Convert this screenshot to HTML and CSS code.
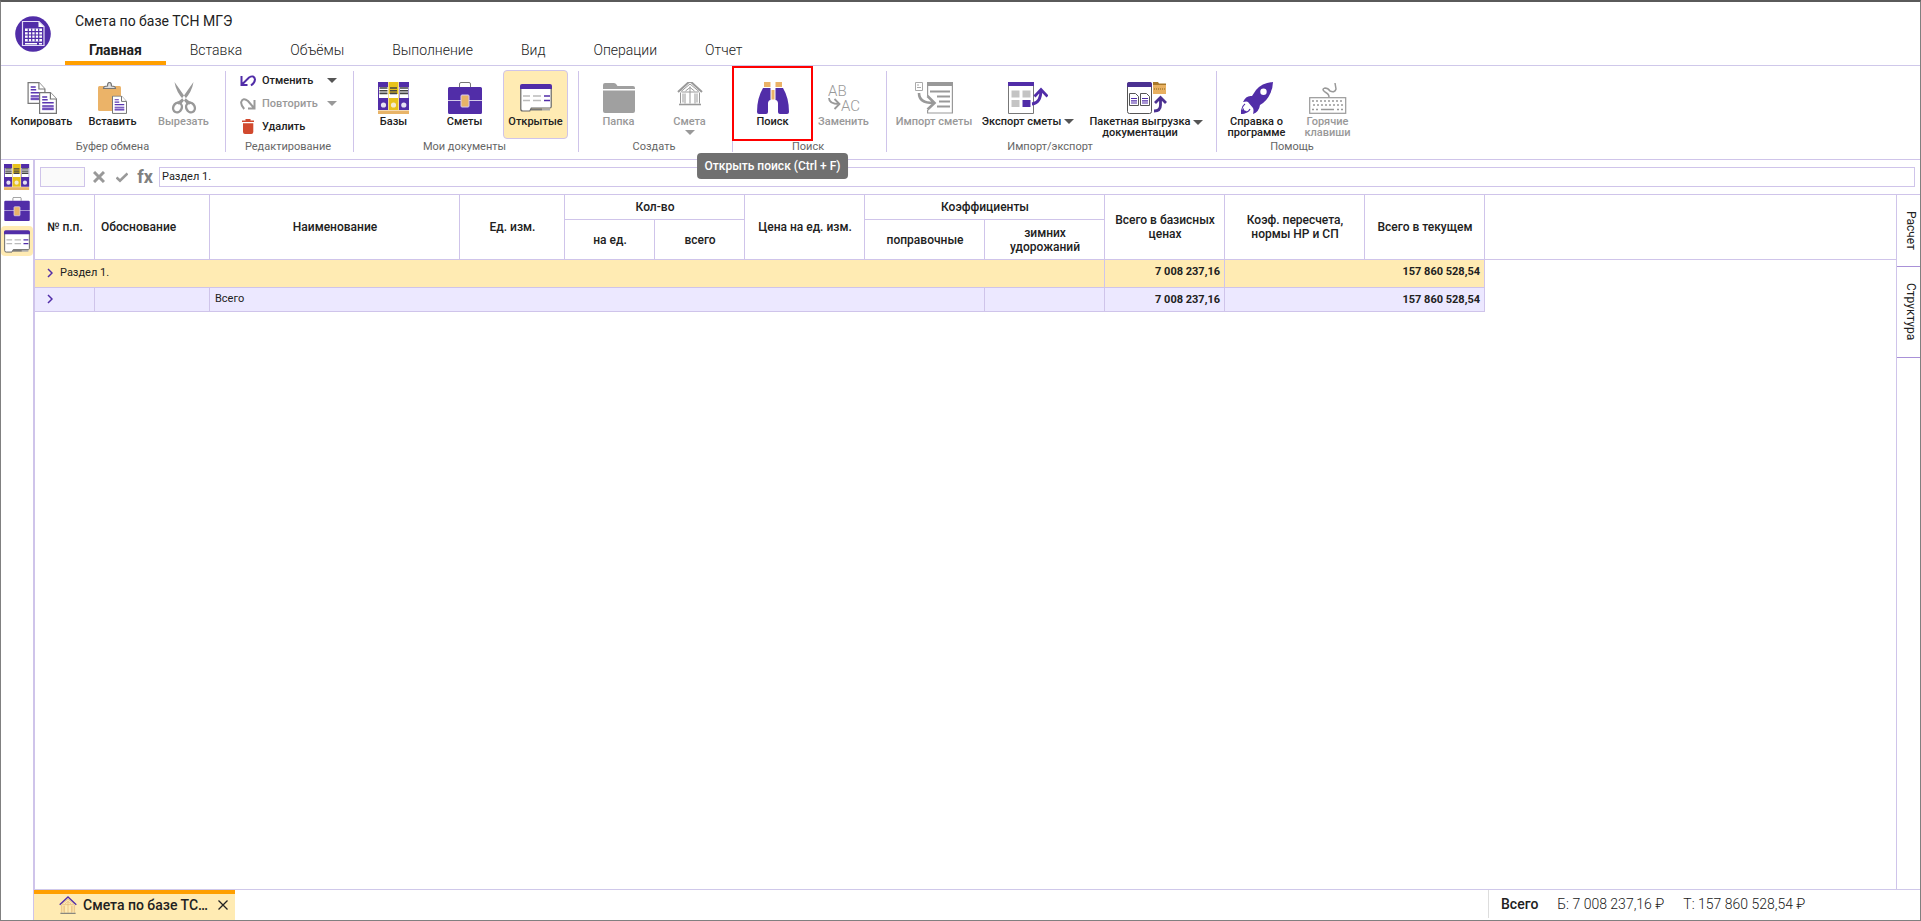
FILE: index.html
```html
<!DOCTYPE html>
<html lang="ru">
<head>
<meta charset="utf-8">
<title>Смета по базе ТСН МГЭ</title>
<link rel="stylesheet" href="styles.css">
</head>
<body>
<svg class="sprite" aria-hidden="true">
  <symbol id="i-bases" viewBox="0 0 32 32">
    <path fill="#512da8" d="M0 0h10v28H0zM21 0h10v28H21z"/><path fill="#e8c21c" d="M10.500 0h10v28h-10z"/>
    <path fill="#fff" d="M1 5h9v11H1zM11 12h9v4h-9zM21.500 5h9v11h-9z"/>
    <path stroke="#444" stroke-width="1.600" d="M1.500 6h8M1.500 8.700h8M1.500 11.400h8M12 6h7M12 8.700h7M12 11.400h7M22 6h8M22 8.700h8M22 11.400h8"/>
    <circle cx="5.500" cy="23" r="2.600" fill="#e6e1f2"/><circle cx="15.500" cy="23" r="2.600" fill="#f3ead0"/><circle cx="25.800" cy="23" r="2.600" fill="#e6e1f2"/>
    <path fill="#e8b468" d="M0 28.500h31V32H0z"/>
  </symbol>
  <symbol id="i-case" viewBox="0 0 34 32">
    <path fill="none" stroke="#777" d="M11.500 5V2q0-1.500 1.500-1.500h8q1.500 0 1.500 1.500v3"/>
    <path fill="#512da8" d="M1.500 5h31Q34 5 34 6.500v11.500H0V6.500Q0 5 1.500 5zM0 18.800h34v11.700Q34 32 32.500 32h-31Q0 32 0 30.500z"/>
    <rect x="13" y="13" width="8" height="12" rx="1" fill="#e8b468" stroke="#d9cdf0"/>
  </symbol>
  <symbol id="i-open" viewBox="0 0 32 28">
    <path fill="#fff" stroke="#666" stroke-width="1.200" d="M.8 4v21q0 2 2 2h7l1.500-3H30q1.200 0 1.200-1.500V4z"/>
    <path fill="#512da8" d="M0 5V2q0-2 2-2h28q2 0 2 2v3z"/>
    <path stroke="#bbb" stroke-width="1.500" d="M3 12h7M13 12h8M3 16.500h7M13 16.500h8"/><path stroke="#512da8" stroke-width="1.500" d="M24 12h6M24 16.500h6"/>
    <path stroke="#777" stroke-width="2" d="M11 25.500h11"/><path stroke="#aaa" stroke-width="2" d="M22 25.500h8"/>
  </symbol>
  <symbol id="i-page" viewBox="0 0 18 22">
    <path fill="#fff" stroke="#777" stroke-width="1.200" d="M.6.600h10.800l6 6.400v14.400H.6z"/><path fill="#fff" stroke="#777" stroke-width="1.200" d="M11.400.600V7h6"/>
    <path fill="#b9a5e0" d="M3.200 14.500h11.500v3.800H3.200z"/><path stroke="#5a36b0" stroke-width="1.400" d="M3.200 5h5M3.200 7.800h5.500M3.200 10.800h11.500M3.200 14h11.500M3.200 17h11.500"/>
  </symbol>
  <symbol id="i-house" viewBox="0 0 26 26">
    <g fill="none" stroke="currentColor"><path d="M4 12l9-7.500 9 7.500M4.500 12.500h17M3.500 13v11M22.500 13v11M8 14v10M13 7v17M18 14v10M8.500 11.500L13 8l4.500 3.500M6 14v9M20 14v9"/><path style="stroke:var(--roof, currentColor)" stroke-width="2" d="M1 12.500L13 1.500l12 11"/><path style="stroke:var(--base, currentColor)" stroke-width="1.600" d="M2 25h22"/></g>
  </symbol>
</svg>

<div class="app">
  <header class="head">
    <svg class="logo" viewBox="0 0 36 36"><circle cx="18" cy="18" r="17.800" fill="#512da8"/><path fill="none" stroke="#e4dcf6" stroke-width="1.200" d="M7.500 5.500h16.500l5 5V29.500H7.500z"/><path fill="#fff" d="M23.500 5.500v5.500H29z"/><path fill="#fff" d="M10 12.500h17v13H10zM10 27h12v1.500H10zM24 27h3v1.500h-3z"/><path stroke="#512da8" stroke-width="1.200" d="M10 15.700h17M10 19h17M10 22.300h17M13.300 12.500v13M16.700 12.500v13M20.200 12.500v13M23.700 12.500v13"/></svg>
    <div class="head-main">
      <h1 class="title">Смета по базе ТСН МГЭ</h1>
      <nav class="tabs">
        <button class="tab tab-active">Главная</button><button class="tab">Вставка</button><button class="tab">Объёмы</button><button class="tab">Выполнение</button><button class="tab">Вид</button><button class="tab">Операции</button><button class="tab">Отчет</button>
      </nav>
    </div>
  </header>

  <section class="ribbon">
    <div class="group group-first">
      <div class="tools">
        <button class="tool"><svg class="ico" viewBox="0 0 32 32"><use href="#i-page" x="1" y="0" width="19" height="22"/><use href="#i-page" x="13" y="10" width="18" height="22"/></svg><span>Копировать</span></button>
        <button class="tool"><svg class="ico" viewBox="0 0 32 32"><rect x="1" y="4" width="23" height="25" rx="1.500" fill="#ebb368"/><path fill="#ddd" stroke="#777" stroke-width="1.200" d="M6.500 6.500q0-2.500 4-2.500 0-3.500 2-3.500t2 3.500q4 0 4 2.500z"/><use href="#i-page" x="15" y="13.500" width="15" height="18.500"/></svg><span>Вставить</span></button>
        <button class="tool" disabled><svg class="ico" viewBox="0 0 32 32"><g fill="none" stroke="#999" stroke-width="2.400"><ellipse cx="9.500" cy="25.500" rx="4.200" ry="5" transform="rotate(25 9.500 25.500)"/><ellipse cx="22.500" cy="25.500" rx="4.200" ry="5" transform="rotate(-25 22.500 25.500)"/></g><path fill="#999" d="M6.500 0l12 17q3 3 6 3.500l-3 2q-3.500-.5-5.500-4Q8 10 6.500 0zM25.500 0l-12 17q-3 3-6 3.500l3 2q3.500-.5 5.500-4Q24 10 25.500 0z"/></svg><span>Вырезать</span></button>
      </div>
      <div class="group-name">Буфер обмена</div>
    </div>

    <div class="group group-edit">
      <div class="edit-list">
        <button class="edit"><svg class="ico-s" viewBox="0 0 16 12"><path fill="none" stroke="#512da8" stroke-width="2" d="M1.500 1v9h6M2 9.500L9 2.500q5-3 6 2 0 3-4 6"/></svg><span>Отменить</span><i class="caret"></i></button>
        <button class="edit" disabled><svg class="ico-s" viewBox="0 0 16 12"><path fill="none" stroke="#999" stroke-width="2" d="M14.500 2v8.500H8M14 10L8 3Q3-1 1.200 4q-.5 3 3 7"/></svg><span>Повторить</span><i class="caret"></i></button>
        <button class="edit"><svg class="ico-s ico-bin" viewBox="0 0 12 15"><path fill="#d1492e" d="M0 1.500h3.500V0h5v1.500H12V3H0zM1 4.200h10.300V13q0 2-2 2H3q-2 0-2-2z"/></svg><span>Удалить</span></button>
      </div>
      <div class="group-name">Редактирование</div>
    </div>

    <div class="group">
      <div class="tools">
        <button class="tool"><svg class="ico"><use href="#i-bases"/></svg><span>Базы</span></button>
        <button class="tool"><svg class="ico ico-w34"><use href="#i-case"/></svg><span>Сметы</span></button>
        <button class="tool tool-active"><svg class="ico" viewBox="0 0 32 32"><use href="#i-open" y="2" width="32" height="28"/></svg><span>Открытые</span></button>
      </div>
      <div class="group-name">Мои документы</div>
    </div>

    <div class="group">
      <div class="tools">
        <button class="tool" disabled><svg class="ico" viewBox="0 0 32 32"><path fill="#a0a0a0" d="M0 7V3q0-2 2-2h9q2 0 3.500 3H30q2 0 2 2v1zM0 8.500h32V29q0 2-2 2H2q-2 0-2-2z"/></svg><span>Папка</span></button>
        <button class="tool tool-drop" disabled><svg class="ico" viewBox="0 0 32 32"><use href="#i-house" x="3" y="-3" width="26" height="27"/></svg><span>Смета</span><i class="caret"></i></button>
      </div>
      <div class="group-name">Создать</div>
    </div>

    <div class="group">
      <div class="tools">
        <button class="tool tool-marked" aria-describedby="tip"><svg class="ico" viewBox="0 0 32 32"><path fill="#ebb368" d="M7 0h6.500v5H7zM18.500 0H25v5h-6.500zM14.500 8h3v9.500h-3z"/><path fill="#512da8" d="M6 6h7.500v12q-2 0-2.500 3v9q0 2-2 2H2q-2 0-2-2 0-14 6-24zM26 6h-7.500v12q2 0 2.500 3v9q0 2 2 2H30q2 0 2-2 0-14-6-24z"/></svg><span>Поиск</span><span class="tooltip" id="tip" role="tooltip">Открыть поиск (Ctrl + F)</span></button>
        <button class="tool" disabled><svg class="ico" viewBox="0 0 32 32"><g fill="#999" font-family="Roboto, sans-serif" font-size="15" font-weight="300"><text x="0" y="14">AB</text><text x="13" y="29">AC</text></g><path fill="none" stroke="#999" stroke-width="1.800" d="M1 16q0 6 10 6M6.500 17l5 5-5 5"/></svg><span>Заменить</span></button>
      </div>
      <div class="group-name">Поиск</div>
    </div>

    <div class="group">
      <div class="tools">
        <button class="tool tool-import" disabled><svg class="ico ico-w38" viewBox="0 0 38 32"><path fill="none" stroke="#aaa" d="M.5.500h7v8h-7zM2 3h2M2 5.500h4"/><path fill="none" stroke="#999" stroke-width="1.200" d="M12.600 14V1h24.800v30H12.600v-3"/><path fill="#999" d="M12 0h26v4H12z"/><path stroke="#999" stroke-width="1.800" d="M15 9.500h20M22 14.500h13M24 19.500h11M22 24.500h13"/><path fill="none" stroke="#999" stroke-width="2.600" d="M4 11q0 10 14 10M12.500 14l7 7-7 6.500"/></svg><span>Импорт сметы</span></button>
        <button class="tool tool-export"><svg class="ico ico-w40" viewBox="0 0 40 32"><path fill="#fff" stroke="#777" d="M.5 3h25v28.500h-25z"/><path fill="#512da8" d="M0 0h26v4H0z"/><path fill="#c4c4c4" d="M3.500 8.500h8v7h-8zM14.500 8.500h8v7h-8zM3.500 18h8v7h-8z"/><path fill="#512da8" d="M14.500 18h8v7h-8z"/><path fill="none" stroke="#512da8" stroke-width="2.800" d="M24 22q9-1 9-14M26.500 14.500l6.500-7 6.500 7"/></svg><span>Экспорт сметы<i class="caret"></i></span></button>
        <button class="tool tool-batch"><svg class="ico ico-w40" viewBox="0 0 40 32"><rect x=".5" y=".5" width="24" height="31" rx="2" fill="#fff" stroke="#555"/><path fill="#4b3191" d="M0 5V2q0-2 2-2h21q2 0 2 2v3z"/><path fill="#fff" stroke="#555" d="M2.500 11.500h6l3 3v9h-9zM13.500 11.500h6l3 3v9h-9z"/><path stroke="#512da8" stroke-width="1.200" d="M4 16.500h6M4 18.800h6M4 21h6M15 16.500h6M15 18.800h6M15 21h6"/><path fill="#a87828" d="M26 0h5l1 1.500h7V4H26z"/><path fill="#e8b060" d="M26 3h13v9H26z"/><path stroke="#8a651f" stroke-dasharray="1 1" d="M27 7h11"/><path fill="none" stroke="#4b3191" stroke-width="2.800" d="M27 29q6.500 0 6.500-6v-6M28 21l5.500-5.500L39 21"/></svg><span class="batch-name"><span>Пакетная выгрузка<br>документации</span><i class="caret"></i></span></button>
      </div>
      <div class="group-name">Импорт/экспорт</div>
    </div>

    <div class="group group-last">
      <div class="tools">
        <button class="tool"><svg class="ico" viewBox="0 0 32 32"><path fill="#512da8" fill-rule="evenodd" d="M32 0Q21 1 15 8l-4 6q-6-1-9 6 4-1 5 0l5 6q1 2 0 6 6-2 7-9 7-4 10-11 3-6 3-12zM22.500 6.500a3.200 3.200 0 1 1 0 6.400 3.200 3.200 0 0 1 0-6.400z"/><path fill="none" stroke="#512da8" stroke-width="1.200" d="M4 22Q0 25 .6 31.400 7 31 9 27"/><path fill="#512da8" d="M0 32q0-4 3-6-1 3 3 3-2 3-6 3z"/></svg><span>Справка о<br>программе</span></button>
        <button class="tool" disabled><svg class="ico ico-w38" viewBox="0 0 38 32"><path fill="none" stroke="#999" stroke-width="1.500" d="M20 15q0-3-4-5-4-3 0-4 3 0 5 3 5 2 6-2l-1-6"/><rect x=".700" y="15.700" width="36" height="15.600" fill="#fff" stroke="#999" stroke-width="1.200"/><path stroke="#999" stroke-width="1.500" stroke-dasharray="2 2" d="M3 19h32M4 23h30M3 27.500h8M28 27.500h7"/><path stroke="#999" stroke-width="1.500" d="M12 27.500h13"/></svg><span>Горячие<br>клавиши</span></button>
      </div>
      <div class="group-name">Помощь</div>
    </div>
  </section>

  <div class="body">
    <aside class="rail">
      <button class="rail-btn" aria-label="Базы"><svg width="26" height="26"><use href="#i-bases"/></svg></button>
      <button class="rail-btn" aria-label="Сметы"><svg width="26" height="24"><use href="#i-case"/></svg></button>
      <button class="rail-btn rail-active" aria-label="Открытые"><svg width="26" height="23"><use href="#i-open"/></svg></button>
    </aside>

    <main class="main">
      <div class="formula">
        <input class="cell-ref" aria-label="Ячейка" disabled>
        <button class="f-btn" aria-label="Отмена"><svg width="12" height="12" viewBox="0 0 12 12"><path stroke="#999" stroke-width="3" d="M1 1l10 10M11 1L1 11"/></svg></button>
        <button class="f-btn" aria-label="Применить"><svg width="12" height="12" viewBox="0 0 12 12"><path fill="none" stroke="#999" stroke-width="2.600" d="M.5 6.500l3.500 3.300L11.500 2.500"/></svg></button>
        <button class="f-btn fx">fx</button>
        <input class="cell-text" aria-label="Значение" value="Раздел 1.">
      </div>

      <div class="work">
        <div class="sheet">
          <table class="grid">
            <colgroup><col class="c60"><col class="c115"><col class="c250"><col class="c105"><col class="c90"><col class="c90"><col class="c120"><col class="c120"><col class="c120"><col class="c120"><col class="c140"><col class="c120"></colgroup>
            <thead>
              <tr class="h1"><th rowspan="2">№ п.п.</th><th rowspan="2" class="left">Обоснование</th><th rowspan="2">Наименование</th><th rowspan="2">Ед. изм.</th><th colspan="2">Кол-во</th><th rowspan="2">Цена на ед. изм.</th><th colspan="2">Коэффициенты</th><th rowspan="2">Всего в базисных ценах</th><th rowspan="2">Коэф. пересчета, нормы НР и СП</th><th rowspan="2">Всего в текущем</th></tr>
              <tr class="h2"><th>на ед.</th><th>всего</th><th>поправочные</th><th>зимних удорожаний</th></tr>
            </thead>
            <tbody>
              <tr class="section"><td colspan="9"><button class="expand" aria-label="Развернуть"><svg width="6" height="10" viewBox="0 0 6 10"><path fill="none" stroke="#512da8" stroke-width="1.500" d="M1 1l4 4-4 4"/></svg></button>Раздел 1.</td><td class="num">7 008 237,16</td><td class="num" colspan="2">157 860 528,54</td></tr>
              <tr class="total"><td><button class="expand" aria-label="Развернуть"><svg width="6" height="10" viewBox="0 0 6 10"><path fill="none" stroke="#512da8" stroke-width="1.500" d="M1 1l4 4-4 4"/></svg></button></td><td></td><td colspan="6">Всего</td><td></td><td class="num">7 008 237,16</td><td class="num" colspan="2">157 860 528,54</td></tr>
            </tbody>
          </table>
          <div class="head-rest"></div>
        </div>
        <div class="side">
          <button class="side-tab">Расчет</button>
          <button class="side-tab side-tab-long">Структура</button>
        </div>
      </div>

      <footer class="foot">
        <div class="doc-tab"><svg class="doc-ico" width="18" height="18"><use href="#i-house"/></svg><button class="doc-name" title="Смета по базе ТСН МГЭ">Смета по базе ТС…</button><button class="doc-close" aria-label="Закрыть"><svg width="10" height="10" viewBox="0 0 10 10"><path stroke="#222" stroke-width="1.300" d="M.5.500l9 9M9.500.500l-9 9"/></svg></button></div>
        <div class="sums"><b>Всего</b><span>Б: 7 008 237,16 ₽</span><span>Т: 157 860 528,54 ₽</span></div>
      </footer>
    </main>
  </div>
</div>
</body>
</html>
```
FILE: styles.css
```css
* { box-sizing: border-box; }
body { margin: 0; font-family: Roboto, "Noto Sans", sans-serif; font-size: 11px; color: #212121; background: #fff; }
button { font: inherit; color: inherit; background: none; border: 0; padding: 0; cursor: pointer; }
svg { display: block; flex: none; }
.sprite { position: absolute; width: 0; height: 0; }

.app { min-height: 100vh; display: flex; flex-direction: column; border: 1px solid #808080; border-top: 2px solid #5a5a5a; }

.head { display: flex; gap: 14px; padding-left: 14px; border-bottom: 1px solid #cfc8ea; }
.logo { width: 36px; height: 36px; margin-top: 14px; }
.head-main { display: flex; flex-direction: column; }
.title { margin: 0; padding: 9px 0 3px 10px; font-size: 14px; line-height: 20px; font-weight: 400; }
.tabs { display: flex; }
.tab { padding: 6px 24px 1px; height: 31px; font-size: 14px; line-height: 20px; font-weight: 300; border-bottom: 4px solid transparent; }
.tab-active { font-weight: 700; border-bottom-color: #ff9f00; }

.ribbon { display: flex; height: 94px; padding: 5px 0 7px; border-bottom: 1px solid #cfc4ea; }
.group { display: flex; flex-direction: column; justify-content: space-between; padding: 0 10px 0 7px; border-right: 1px solid #cfc4ea; }
.group-first { padding: 0 9px 0 8px; }
.group-last { border-right: 0; }
.tools { display: flex; gap: 6px; height: 69px; margin-top: -1px; }
.group-name { text-align: center; line-height: 10px; color: #666; }
.tool { position: relative; width: 65px; display: flex; flex-direction: column; align-items: center; padding-top: 11px; line-height: 11px; font-weight: 500; border: 1px solid transparent; border-radius: 4px; white-space: nowrap; }
.tool > span:not(.tooltip) { margin-top: 2px; }
.tool:disabled, .edit:disabled { color: #999; }
.tool-active { background: #ffebb3; border-color: #cfc4ea; }
.ico { width: 32px; height: 32px; }
.ico-w34 { width: 34px; }
.ico-w38 { width: 38px; }
.ico-w40 { width: 40px; }
.caret { display: inline-block; border: 5px solid transparent; border-top-color: #555; border-bottom: 0; }
:disabled .caret { border-top-color: #999; }
.tool span .caret { margin-left: 3px; vertical-align: 1px; }
.tool-drop .caret { margin-top: 3px; }
.tool-import { width: 80px; }
.tool-export { width: 96px; }
.tool-batch { width: 124px; padding-left: 5px; }
.batch-name { display: flex; align-items: flex-start; }
.batch-name .caret { margin-top: 4px; }

.tool-marked::after { content: ""; position: absolute; inset: -5px -9px -3px; border: 2px solid #f00; }
.tooltip { position: absolute; z-index: 2; top: 82px; left: 50%; transform: translateX(-50%); padding: 6px 8px; border-radius: 4px; background: #707070; color: #fff; font-size: 12px; line-height: 14px; font-weight: 500; }

.group-edit { width: 128px; }
.edit-list { display: flex; flex-direction: column; margin-top: -2px; padding: 0 6px 0 7px; }
.edit { display: grid; grid-template-columns: 16px 1fr 10px; column-gap: 6px; align-items: center; height: 23px; text-align: left; line-height: 12px; font-weight: 500; }
.ico-s { width: 16px; height: 12px; }
.ico-bin { width: 12px; height: 15px; justify-self: center; }

.body { flex: 1; display: flex; }
.rail { width: 34px; display: flex; flex-direction: column; align-items: center; gap: 2px; padding-top: 2px; border-right: 2px solid #cfc4ea; }
.rail-btn { display: flex; align-items: center; justify-content: center; width: 32px; height: 30px; border-radius: 4px; }
.rail-active { background: #ffebb3; }

.main { flex: 1; min-width: 0; display: flex; flex-direction: column; }
.formula { display: flex; align-items: center; gap: 5px; height: 34px; padding: 0 5px; }
.cell-ref { width: 45px; height: 20px; background: #fafafa; border: 1px solid #cfc4ea; }
.f-btn { width: 18px; height: 20px; display: flex; align-items: center; justify-content: center; }
.fx { font-size: 18px; line-height: 18px; font-weight: 700; color: #808080; }
.cell-text { flex: 1; height: 20px; padding: 0 2px 2px; font: inherit; color: inherit; border: 1px solid #cfc4ea; }

.work { flex: 1; display: flex; border-top: 1px solid #cfc4ea; }
.sheet { flex: 1; min-width: 0; display: flex; align-items: flex-start; }
.head-rest { flex: 1; height: 65px; border-bottom: 1px solid #cfc4ea; }
.grid { table-layout: fixed; width: 1450px; border-collapse: separate; border-spacing: 0; }
.grid th, .grid td { border-right: 1px solid #cfc4ea; border-bottom: 1px solid #cfc4ea; }
.grid th { padding: 0 5px 0 6px; font-size: 12px; line-height: 14px; font-weight: 500; }
.grid .left { text-align: left; }
.h1 { height: 25px; }
.h2 { height: 40px; }
.section { height: 28px; background: #ffebb3; }
.total { height: 24px; background: #ece8ff; }
.grid td { padding: 0 5px 2px; line-height: 13px; }
.grid .num { padding: 0 4px 0 0; text-align: right; font-weight: 700; }
.section .num { padding-bottom: 5px; }
.expand { display: inline-block; vertical-align: middle; padding: 0 7px; }
.c60 { width: 60px; } .c90 { width: 90px; } .c105 { width: 105px; } .c115 { width: 115px; } .c120 { width: 120px; } .c140 { width: 140px; } .c250 { width: 250px; }

.side { width: 24px; display: flex; flex-direction: column; border-left: 1px solid #cfc4ea; }
.side-tab { height: 72px; writing-mode: vertical-rl; text-align: center; padding-left: 4px; font-size: 12px; line-height: 18px; border-bottom: 1px solid #a991d8; }
.side-tab-long { height: 91px; }

.foot { display: flex; justify-content: space-between; border-top: 1px solid #cfc8ea; }
.doc-tab { display: flex; align-items: center; width: 201px; height: 30px; margin-left: -1px; padding: 0 7px 4px 25px; background: #ffebb3; border-top: 4px solid #ff9f00; }
.doc-ico { --roof: #512da8; --base: #777; color: #e5b878; margin-right: 6px; }
.doc-name { flex: 1; white-space: nowrap; text-align: left; font-size: 14px; line-height: 18px; font-weight: 500; }
.sums { display: flex; align-items: center; gap: 19px; width: 432px; height: 28px; padding-left: 12px; border-left: 1px solid #ddd; font-size: 14px; font-weight: 300; }
.sums b { font-weight: 500; }
```
